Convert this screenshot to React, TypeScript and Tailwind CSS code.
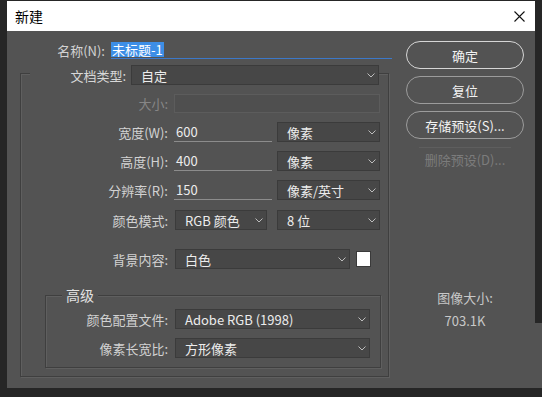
import React from "react";

const Chevron = () => (
  <svg width="8" height="5" viewBox="0 0 8 5" className="shrink-0">
    <path d="M0.5 0.5 L4 4 L7.5 0.5" stroke="#bdbdbd" fill="none" strokeWidth="1" />
  </svg>
);

const Dropdown = ({ w, text, ml = "" }: { w: string; text: string; ml?: string }) => (
  <div
    className={`${w} ${ml} h-[20px] bg-[#474747] border border-[#3b3b3b] flex items-center justify-between pl-[9px] pr-[3px] text-[13px] text-[#ececec] leading-none`}
  >
    <span>{text}</span>
    <Chevron />
  </div>
);

const Label = ({ w, text, dim = false }: { w: string; text: string; dim?: boolean }) => (
  <div className={`${w} shrink-0 text-right text-[13px] leading-none ${dim ? "text-[#868686]" : "text-[#d2d2d2]"}`}>
    {text}
  </div>
);

const TextInput = ({ value }: { value: string }) => (
  <div className="ml-[6px] w-[98px] h-[20px] border-b border-[#8c8c8c] flex items-center pl-[2px] text-[13px] text-[#ececec] leading-none">
    {value}
  </div>
);

export default function App() {
  return (
    <div className="relative w-[542px] h-[397px] bg-[#262626] overflow-hidden pt-[1px] pl-[7px] font-['Noto_Sans_CJK_SC','Noto_Sans',sans-serif]">
      <div className="w-[528px] h-[387px] bg-[#535353] flex flex-col">
        {/* Title bar */}
        <div className="h-[30px] bg-white flex items-center justify-between pl-[8px] pr-[10px] shrink-0">
          <span className="text-[14px] text-black leading-none">新建</span>
          <svg width="11" height="11" viewBox="0 0 11 11">
            <path d="M0.5 0.5 L10.5 10.5 M10.5 0.5 L0.5 10.5" stroke="#111" strokeWidth="1.1" fill="none" />
          </svg>
        </div>

        <div className="flex flex-row flex-1">
          {/* Left column */}
          <div className="w-[385px] flex flex-col">
            {/* Name */}
            <div className="mt-[10px] h-[18px] flex items-center">
              <Label w="w-[98px]" text="名称(N):" />
              <div className="ml-[6px] w-[281px] h-[18px] border-b border-[#3c78c8] flex items-center">
                <span className="bg-[#3d8ee6] text-white text-[13px] leading-[15px] px-[1px]">未标题-1</span>
              </div>
            </div>

            {/* Group box */}
            <div className="mt-[14px] ml-[13px] w-[369px] border border-[#3f3f3f] shadow-[inset_1px_1px_0_#5f5f5f,1px_1px_0_#5f5f5f] pb-[8px] flex flex-col">
              <div className="-mt-[9px] ml-[9px] w-fit bg-[#535353] flex items-center h-[20px]">
                <div className="w-[96px] text-right text-[13px] text-[#d8d8d8] leading-none">文档类型:</div>
                <Dropdown w="w-[248px]" ml="ml-[5px]" text="自定" />
              </div>

              {/* 大小 */}
              <div className="mt-[9px] h-[19px] flex items-center">
                <Label w="w-[147px]" text="大小:" dim />
                <div className="ml-[6px] w-[206px] h-[19px] bg-[#4f4f4f] border border-[#5c5c5c]" />
              </div>

              <div className="mt-[9px] h-[20px] flex items-center">
                <Label w="w-[147px]" text="宽度(W):" />
                <TextInput value="600" />
                <Dropdown w="w-[103px]" ml="ml-[5px]" text="像素" />
              </div>

              <div className="mt-[9px] h-[20px] flex items-center">
                <Label w="w-[147px]" text="高度(H):" />
                <TextInput value="400" />
                <Dropdown w="w-[103px]" ml="ml-[5px]" text="像素" />
              </div>

              <div className="mt-[9px] h-[20px] flex items-center">
                <Label w="w-[147px]" text="分辨率(R):" />
                <TextInput value="150" />
                <Dropdown w="w-[103px]" ml="ml-[5px]" text="像素/英寸" />
              </div>

              <div className="mt-[10px] h-[20px] flex items-center">
                <Label w="w-[147px]" text="颜色模式:" />
                <Dropdown w="w-[92px]" ml="ml-[7px]" text="RGB 颜色" />
                <Dropdown w="w-[103px]" ml="ml-[10px]" text="8 位" />
              </div>

              <div className="mt-[19px] h-[20px] flex items-center">
                <Label w="w-[147px]" text="背景内容:" />
                <Dropdown w="w-[175px]" ml="ml-[7px]" text="白色" />
                <div className="ml-[6px] w-[15px] h-[16px] bg-white border border-[#3a3a3a]" />
              </div>

              {/* Advanced */}
              <div className="mt-[26px] ml-[24px] w-[336px] border border-[#3f3f3f] shadow-[inset_1px_1px_0_#5f5f5f,1px_1px_0_#5f5f5f] pb-[9px] flex flex-col">
                <div className="-mt-[11px] ml-[16px] px-[4px] h-[20px] w-fit bg-[#535353] flex items-center text-[14px] text-[#e2e2e2] leading-none">
                  高级
                </div>
                <div className="mt-[4px] h-[20px] flex items-center">
                  <Label w="w-[122px]" text="颜色配置文件:" />
                  <Dropdown w="w-[195px]" ml="ml-[7px]" text="Adobe RGB (1998)" />
                </div>
                <div className="mt-[9px] h-[20px] flex items-center">
                  <Label w="w-[122px]" text="像素长宽比:" />
                  <Dropdown w="w-[195px]" ml="ml-[7px]" text="方形像素" />
                </div>
              </div>
            </div>
          </div>

          {/* Right column */}
          <div className="ml-[14px] w-[118px] flex flex-col items-center">
            <button className="mt-[10px] w-[118px] h-[28px] rounded-full border-[1.5px] border-[#d6d6d6] text-[13px] text-[#f2f2f2] leading-none">
              确定
            </button>
            <button className="mt-[7px] w-[118px] h-[28px] rounded-full border border-[#9c9c9c] text-[13px] text-[#f2f2f2] leading-none">
              复位
            </button>
            <button className="mt-[7px] w-[118px] h-[28px] rounded-full border border-[#9c9c9c] text-[13px] text-[#f2f2f2] leading-none">
              存储预设(S)...
            </button>
            <div className="mt-[8px] w-[92px] h-[23px] border-t border-[#5e5e5e] flex items-center justify-center text-[13px] text-[#7c7c7c] leading-none">
              删除预设(D)...
            </div>
            <div className="mt-[118px] h-[18px] flex items-center text-[13px] text-[#c8c8c8] leading-none">图像大小:</div>
            <div className="mt-[5px] h-[18px] flex items-center text-[13px] text-[#c8c8c8] leading-none">703.1K</div>
          </div>
        </div>
      </div>
      <div className="absolute left-[535px] top-[323px] w-[7px] h-[65px] bg-[#535353]" />
    </div>
  );
}
